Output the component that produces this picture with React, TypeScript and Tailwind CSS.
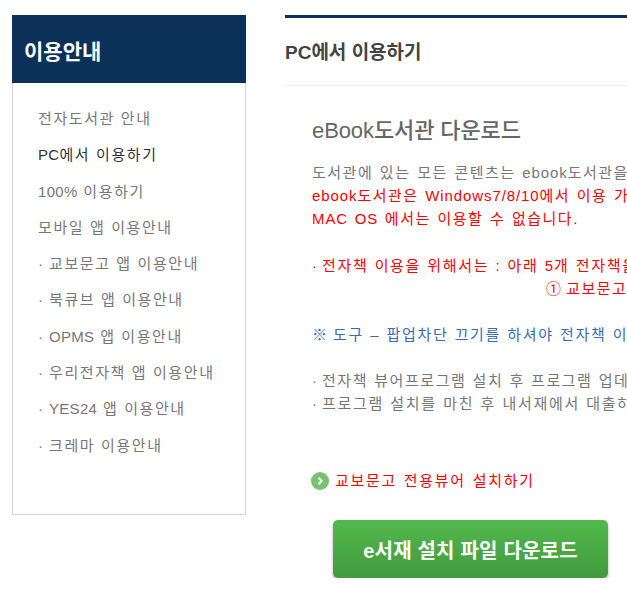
function Mixed({ text, latin }: { text: string; latin: string }) {
  const parts = text.split(/([A-Za-z0-9%/.]+)/);
  return (
    <>
      {parts.map((p, i) =>
        /^[A-Za-z0-9%/.]+$/.test(p) ? (
          <span key={i} className={latin}>{p}</span>
        ) : (
          <span key={i}>{p}</span>
        )
      )}
    </>
  );
}

const menu = [
  { t: "전자도서관 안내" },
  { t: "PC에서 이용하기", active: true },
  { t: "100% 이용하기" },
  { t: "모바일 앱 이용안내" },
  { t: "교보문고 앱 이용안내", dot: true },
  { t: "북큐브 앱 이용안내", dot: true },
  { t: "OPMS 앱 이용안내", dot: true },
  { t: "우리전자책 앱 이용안내", dot: true },
  { t: "YES24 앱 이용안내", dot: true },
  { t: "크레마 이용안내", dot: true },
];

const B = ({ t }: { t: string }) => <Mixed text={t} latin="tracking-[0.9px]" />;

export default function App() {
  return (
    <div className="w-[627px] h-[590px] overflow-hidden bg-white flex items-start pt-[15px] pl-[12px] [font-family:'Liberation_Sans','Noto_Sans_CJK_KR',sans-serif]">
      <aside className="w-[234px] h-[500px] shrink-0 border border-[#d5d5d5] border-t-0">
        <div className="h-[68px] -mx-px bg-[#0b3159] flex items-center pl-[12px] pt-[5px] text-white text-[21px] font-bold">이용안내</div>
        <ul className="pt-[18px] pl-[25px]">
          {menu.map((m) => (
            <li
              key={m.t}
              className={`h-[36.3px] leading-[36.3px] text-[15px] tracking-[1.6px] whitespace-nowrap ${m.active ? "text-[#333]" : "text-[#777]"}`}
            >
              {m.dot && <span className="inline-block w-[11px] tracking-normal">·</span>}
              <Mixed text={m.t} latin="tracking-[0.3px]" />
            </li>
          ))}
        </ul>
      </aside>

      <main className="ml-[39px] w-[342px] shrink-0 overflow-hidden">
        <div className="h-[3px] bg-[#0b3159]" />
        <h2 className="h-[68px] flex items-center text-[19px] font-bold text-[#444] border-b border-[#eee] whitespace-nowrap pt-[3px]">PC에서 이용하기</h2>
        <div className="pl-[27px] whitespace-nowrap">
          <h3 className="mt-[30px] h-[30px] leading-[30px] text-[22px] font-medium tracking-[-0.1px] text-[#666]">eBook도서관 다운로드</h3>
          <div className="mt-[15px] text-[15px] leading-[23px] tracking-[1.5px] [word-spacing:1px]">
            <p className="text-[#777]"><B t="도서관에 있는 모든 콘텐츠는 ebook도서관을 이용하셔야 합니다." /></p>
            <p className="text-[#ff0000]"><B t="ebook도서관은 Windows7/8/10에서 이용 가능하며" /></p>
            <p className="text-[#ff0000]"><B t="MAC OS 에서는 이용할 수 없습니다." /></p>
            <p className="mt-[24px] text-[#ff0000] flex"><span className="inline-block w-[10px] shrink-0 tracking-normal">·</span><span className="tracking-[1.65px] [word-spacing:0.5px]"><B t="전자책 이용을 위해서는 : 아래 5개 전자책을 설치" /></span></p>
            <p className="pl-[234px] text-[#ff0000] [word-spacing:-2px]">① 교보문고</p>
            <p className="mt-[23px] text-[#3a6cb5] flex"><span className="inline-block w-[21px] shrink-0 tracking-normal">※</span><span className="tracking-[1.65px] [word-spacing:0.5px]">도구 – 팝업차단 끄기를 하셔야 전자책 이용이</span></p>
            <p className="mt-[23px] text-[#777] flex"><span className="inline-block w-[10px] shrink-0 tracking-normal">·</span><span className="tracking-[1.55px] [word-spacing:0.5px]">전자책 뷰어프로그램 설치 후 프로그램 업데이트</span></p>
            <p className="text-[#777] flex"><span className="inline-block w-[10px] shrink-0 tracking-normal">·</span><span className="tracking-[1.7px] [word-spacing:0.5px]">프로그램 설치를 마친 후 내서재에서 대출하기</span></p>
          </div>
          <div className="mt-[54px] -ml-px flex items-center h-[24px] text-[15px] tracking-[1.7px] [word-spacing:1px] text-[#ff0000]">
            <svg width="18" height="18" viewBox="0 0 18 18" className="shrink-0 mr-[6px]">
              <circle cx="9" cy="9" r="9" fill="#74c36f" />
              <path d="M7.5 5.8 10.7 9l-3.2 3.2" fill="none" stroke="#fff" strokeWidth="2" />
            </svg>
            교보문고 전용뷰어 설치하기
          </div>
          <div className="ml-[21px] mt-[27px] w-[275px] h-[58px] pt-[3px] rounded-[5px] bg-gradient-to-b from-[#52b94d] to-[#429a3d] shadow-[0_2px_3px_rgba(0,0,0,0.35)] flex items-center justify-center text-white text-[20px] font-bold tracking-[0.2px] text-center">
            e서재 설치 파일 다운로드
          </div>
        </div>
      </main>
    </div>
  );
}
